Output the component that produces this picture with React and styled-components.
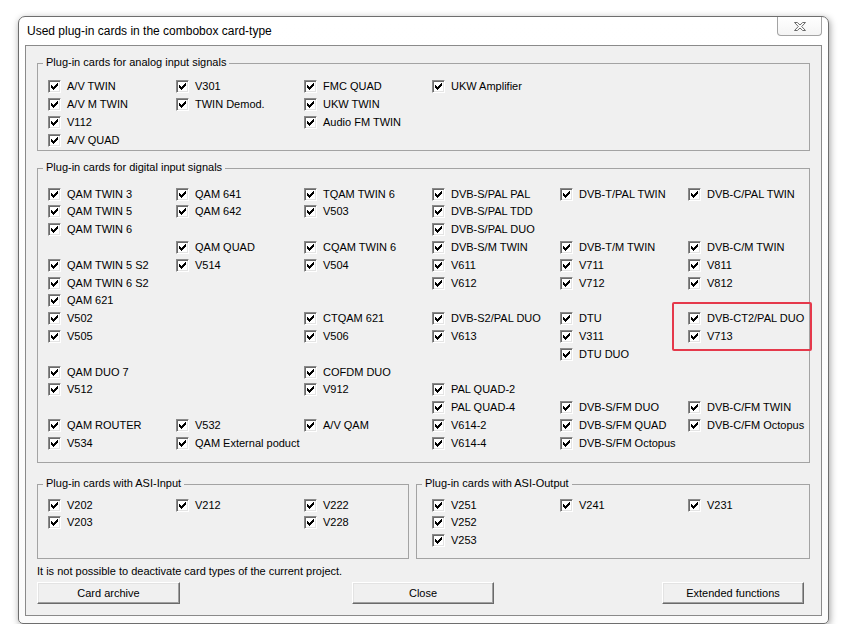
import React from "react";
import styled, { createGlobalStyle } from "styled-components";

const GlobalStyle = createGlobalStyle`
  html, body { margin: 0; padding: 0; background: #ffffff; }
  body { font-family: "Liberation Sans", Arial, sans-serif; font-size: 11px; color: #000; }
`;

const Page = styled.div`
  padding: 16px 0 0 18px;
`;

const Window = styled.div`
  box-sizing: border-box;
  width: 811px;
  height: 608px;
  border: 1px solid #6e6e6e;
  border-radius: 7px 7px 5px 5px;
  background: linear-gradient(180deg, #ffffff 0%, #fbfbfb 100%);
  box-shadow: 1px 2px 7px rgba(0, 0, 0, 0.38);
  padding: 0 6px 7px 6px;
  display: flex;
  flex-direction: column;
`;

const TitleBar = styled.div`
  height: 28px;
  display: flex;
  align-items: flex-start;
  flex-shrink: 0;
`;

const Title = styled.div`
  font-family: "Liberation Sans", Arial, sans-serif;
  font-size: 12px;
  line-height: 15px;
  padding: 7px 0 0 2px;
  color: #000;
`;

const CloseBtn = styled.div`
  box-sizing: border-box;
  margin-left: auto;
  width: 45px;
  height: 19px;
  border: 1px solid #a3a3a3;
  border-top: none;
  border-radius: 0 0 4px 4px;
  background: linear-gradient(180deg, #ffffff 0%, #f4f4f4 100%);
  display: flex;
  align-items: center;
  justify-content: center;
`;

const Client = styled.div`
  box-sizing: border-box;
  height: 572px;
  min-width: 0;
  border: 1px solid #8a8a8a;
  background: #f0f0f0;
  padding: 0 11px 0 11px;
  display: flex;
  flex-direction: column;
`;

const Group = styled.div`
  position: relative;
  box-sizing: border-box;
  min-width: 0;
  border: 1px solid #a3a3a3;
  margin-top: ${(p) => p.$mt}px;
  padding: ${(p) => p.$pt}px 0 ${(p) => p.$pb}px ${(p) => p.$pl}px;
  flex: ${(p) => (p.$grow ? "1 1 0" : "none")};
  width: ${(p) => (p.$w ? `${p.$w}px` : "auto")};
`;

const Legend = styled.div`
  position: absolute;
  left: 5px;
  top: -8px;
  padding: 0 3px 0 3px;
  line-height: 13px;
  background: #f0f0f0;
  white-space: nowrap;
`;

const Grid = styled.div`
  display: grid;
  grid-template-columns: repeat(${(p) => p.$cols - 1}, 128px) minmax(0, 1fr);
  grid-auto-rows: 17.8px;
`;

const Item = styled.label`
  display: flex;
  align-items: center;
  gap: 6px;
  white-space: nowrap;
  line-height: 13px;
`;

const Box = styled.span`
  box-sizing: border-box;
  width: 13px;
  height: 13px;
  flex-shrink: 0;
  background: #ffffff;
  border: 1px solid;
  border-color: #8a8a8a #ffffff #ffffff #8a8a8a;
  box-shadow: inset 1px 1px 0 #6a6a6a, inset -1px -1px 0 #e3e3e3;
  display: flex;
`;

const Row = styled.div`
  display: flex;
  gap: 7px;
  margin-top: 21px;
  min-width: 0;
`;

const Note = styled.div`
  margin-top: 6px;
  line-height: 13px;
`;

const Buttons = styled.div`
  margin-top: 4px;
  display: flex;
`;

const Button = styled.div`
  box-sizing: border-box;
  width: ${(p) => p.$w}px;
  margin-left: ${(p) => p.$ml || 0}px;
  height: 22px;
  background: #f0f0f0;
  border: 1px solid;
  border-color: #ffffff #6a6a6a #6a6a6a #ffffff;
  box-shadow: inset -1px -1px 0 #a0a0a0, inset 1px 1px 0 #e3e3e3;
  display: flex;
  align-items: center;
  justify-content: center;
  font-size: 11px;
`;

const Highlight = styled.div`
  position: absolute;
  left: 634px;
  top: 133px;
  width: 140px;
  height: 49px;
  box-sizing: border-box;
  border: 2px solid #e5394b;
  border-radius: 2px;
  pointer-events: none;
`;

const CheckMark = () => (
  <svg width="11" height="11" viewBox="0 0 11 11" shapeRendering="crispEdges">
    <path
      fill="#000"
      d="M8 2h1v1h-1z M7 3h2v1h-2z M2 4h1v1h-1z M6 4h3v1h-3z M2 5h2v1h-2z M5 5h3v1h-3z M2 6h5v1h-5z M3 7h3v1h-3z M4 8h1v1h-1z"
    />
  </svg>
);

const Check = ({ label }) => (
  <Item>
    <Box>
      <CheckMark />
    </Box>
    <span>{label}</span>
  </Item>
);

const Cells = ({ rows }) =>
  rows.flatMap((r, i) =>
    r.map((c, j) => (c ? <Check key={`${i}-${j}`} label={c} /> : <span key={`${i}-${j}`} />))
  );

const analog = [
  ["A/V TWIN", "V301", "FMC QUAD", "UKW Amplifier", null, null],
  ["A/V M TWIN", "TWIN Demod.", "UKW TWIN", null, null, null],
  ["V112", null, "Audio FM TWIN", null, null, null],
  ["A/V QUAD", null, null, null, null, null],
];

const digital = [
  ["QAM TWIN 3", "QAM 641", "TQAM TWIN 6", "DVB-S/PAL PAL", "DVB-T/PAL TWIN", "DVB-C/PAL TWIN"],
  ["QAM TWIN 5", "QAM 642", "V503", "DVB-S/PAL TDD", null, null],
  ["QAM TWIN 6", null, null, "DVB-S/PAL DUO", null, null],
  [null, "QAM QUAD", "CQAM TWIN 6", "DVB-S/M TWIN", "DVB-T/M TWIN", "DVB-C/M TWIN"],
  ["QAM TWIN 5 S2", "V514", "V504", "V611", "V711", "V811"],
  ["QAM TWIN 6 S2", null, null, "V612", "V712", "V812"],
  ["QAM 621", null, null, null, null, null],
  ["V502", null, "CTQAM 621", "DVB-S2/PAL DUO", "DTU", "DVB-CT2/PAL DUO"],
  ["V505", null, "V506", "V613", "V311", "V713"],
  [null, null, null, null, "DTU DUO", null],
  ["QAM DUO 7", null, "COFDM DUO", null, null, null],
  ["V512", null, "V912", "PAL QUAD-2", null, null],
  [null, null, null, "PAL QUAD-4", "DVB-S/FM DUO", "DVB-C/FM TWIN"],
  ["QAM ROUTER", "V532", "A/V QAM", "V614-2", "DVB-S/FM QUAD", "DVB-C/FM Octopus"],
  ["V534", "QAM External poduct", null, "V614-4", "DVB-S/FM Octopus", null],
];

const asiIn = [
  ["V202", "V212", "V222"],
  ["V203", null, "V228"],
  [null, null, null],
];

const asiOut = [
  ["V251", "V241", "V231"],
  ["V252", null, null],
  ["V253", null, null],
];

const CloseGlyph = () => (
  <svg width="14" height="11" viewBox="0 0 14 11">
    <path
      d="M1.5 1.5 H4.3 L7 4 L9.7 1.5 H12.5 L8.7 5.5 L12.5 9.5 H9.7 L7 7 L4.3 9.5 H1.5 L5.3 5.5 Z"
      fill="#ffffff"
      stroke="#6a6a6a"
      strokeWidth="1"
      strokeLinejoin="round"
    />
  </svg>
);

export default function App() {
  return (
    <>
      <GlobalStyle />
      <Page>
        <Window>
          <TitleBar>
            <Title>Used plug-in cards in the combobox card-type</Title>
            <CloseBtn>
              <CloseGlyph />
            </CloseBtn>
          </TitleBar>
          <Client>
            <Group $mt={17} $pt={14} $pb={1} $pl={10}>
              <Legend>Plug-in cards for analog input signals</Legend>
              <Grid $cols={6}>
                <Cells rows={analog} />
              </Grid>
            </Group>
            <Group $mt={17} $pt={16} $pb={10} $pl={10}>
              <Legend>Plug-in cards for digital input signals</Legend>
              <Grid $cols={6}>
                <Cells rows={digital} />
              </Grid>
              <Highlight />
            </Group>
            <Row>
              <Group $mt={0} $pt={11} $pb={8} $pl={10} $w={372}>
                <Legend>Plug-in cards with ASI-Input</Legend>
                <Grid $cols={3}>
                  <Cells rows={asiIn} />
                </Grid>
              </Group>
              <Group $mt={0} $pt={11} $pb={8} $pl={15} $grow>
                <Legend>Plug-in cards with ASI-Output</Legend>
                <Grid $cols={3}>
                  <Cells rows={asiOut} />
                </Grid>
              </Group>
            </Row>
            <Note>It is not possible to deactivate card types of the current project.</Note>
            <Buttons>
              <Button $w={143}>Card archive</Button>
              <Button $w={142} $ml={172}>Close</Button>
              <Button $w={142} $ml={168}>Extended functions</Button>
            </Buttons>
          </Client>
        </Window>
      </Page>
    </>
  );
}
